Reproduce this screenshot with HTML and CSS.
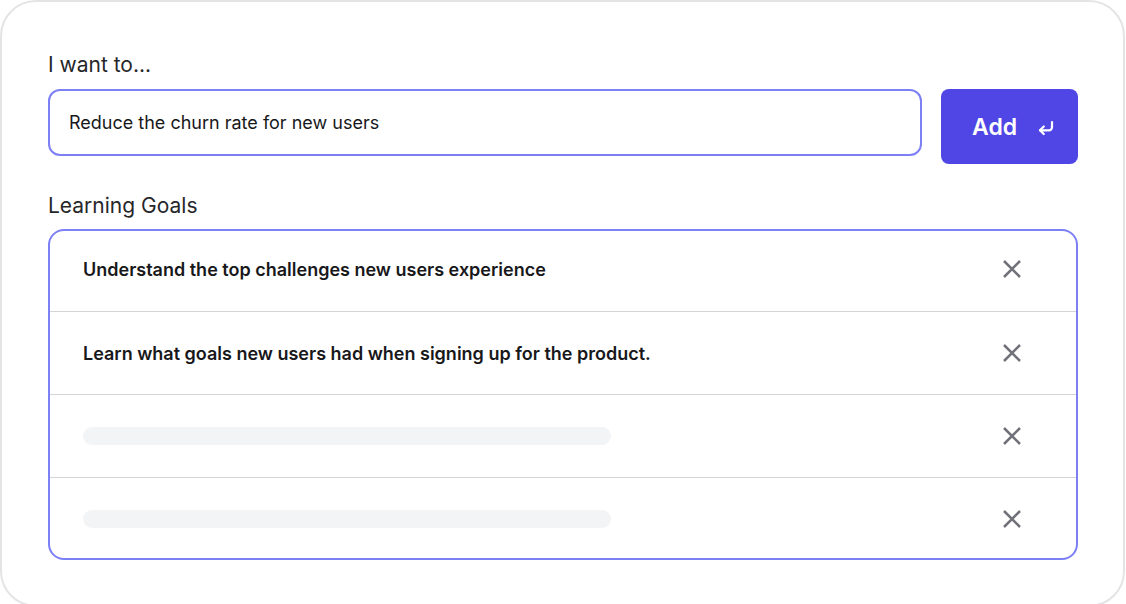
FILE: index.html
```html
<!DOCTYPE html>
<html lang="en">
<head>
<meta charset="utf-8">
<title>Learning Goals</title>
<link rel="stylesheet" href="styles.css">
</head>
<body>
<div class="card">
  <div class="label">I want to...</div>
  <div class="entry">
    <div class="input">Reduce the churn rate for new users</div>
    <button class="add">
      <span>Add</span>
      <svg class="enter" viewBox="0 0 24 24" width="18" height="18" fill="none" stroke="#fff" stroke-width="3" stroke-linecap="round" stroke-linejoin="round"><polyline points="9 10 4 15 9 20"/><path d="M20 4v7a4 4 0 0 1-4 4H4"/></svg>
    </button>
  </div>
  <div class="label label-goals">Learning Goals</div>
  <div class="goals">
    <div class="goal goal-first">
      <span class="goal-text">Understand the top challenges new users experience</span>
      <svg class="close" viewBox="0 0 18 18" width="18" height="18"><path d="M1 1L17 17M17 1L1 17" stroke="#71717a" stroke-width="2.5"/></svg>
    </div>
    <div class="goal">
      <span class="goal-text">Learn what goals new users had when signing up for the product.</span>
      <svg class="close" viewBox="0 0 18 18" width="18" height="18"><path d="M1 1L17 17M17 1L1 17" stroke="#71717a" stroke-width="2.5"/></svg>
    </div>
    <div class="goal">
      <span class="skeleton"></span>
      <svg class="close" viewBox="0 0 18 18" width="18" height="18"><path d="M1 1L17 17M17 1L1 17" stroke="#71717a" stroke-width="2.5"/></svg>
    </div>
    <div class="goal">
      <span class="skeleton"></span>
      <svg class="close" viewBox="0 0 18 18" width="18" height="18"><path d="M1 1L17 17M17 1L1 17" stroke="#71717a" stroke-width="2.5"/></svg>
    </div>
  </div>
</div>
</body>
</html>
```
FILE: styles.css
```css
html, body {
  margin: 0;
  padding: 0;
  overflow: hidden;
  background: #ffffff;
}
body {
  font-family: Inter, "Noto Sans", "Liberation Sans", sans-serif;
}
.card {
  box-sizing: border-box;
  width: 1125px;
  height: 607px;
  border: 2px solid #e4e4e7;
  border-radius: 36px;
  background: #fff;
  padding: 49px 45px 0 46px;
}
.label {
  font-size: 21px;
  line-height: 28px;
  color: #27272a;
  margin-bottom: 10px;
}
.label-goals {
  margin-top: 28px;
  margin-bottom: 9px;
}
.entry {
  display: flex;
  align-items: flex-start;
  gap: 19px;
}
.input {
  box-sizing: border-box;
  flex: 1;
  height: 67px;
  border: 2px solid #7d80f4;
  border-radius: 12px;
  padding-left: 19px;
  display: flex;
  align-items: center;
  font-size: 18px;
  color: #18181b;
}
.add {
  box-sizing: border-box;
  width: 137px;
  height: 75px;
  border: none;
  border-radius: 8px;
  background: #4f46e5;
  color: #fff;
  font-family: inherit;
  font-size: 23px;
  font-weight: 600;
  display: flex;
  align-items: center;
  padding: 0 0 0 31px;
  gap: 20px;
}
.enter {
  display: block;
  margin-top: 2px;
}
.goals {
  box-sizing: border-box;
  height: 331px;
  border: 2px solid #7d80f4;
  border-radius: 16px;
  overflow: hidden;
}
.goal {
  box-sizing: border-box;
  height: 83px;
  display: flex;
  align-items: center;
  justify-content: space-between;
  padding: 0 55px 0 33px;
}
.goal-first {
  height: 80px;
  padding-bottom: 4px;
}
.goal + .goal {
  border-top: 1px solid #d4d4d8;
}
.goal-text {
  font-size: 18px;
  font-weight: 600;
  color: #18181b;
}
.skeleton {
  display: block;
  width: 528px;
  height: 18px;
  border-radius: 9px;
  background: #f3f4f6;
}
.close {
  display: block;
  flex-shrink: 0;
}
```
